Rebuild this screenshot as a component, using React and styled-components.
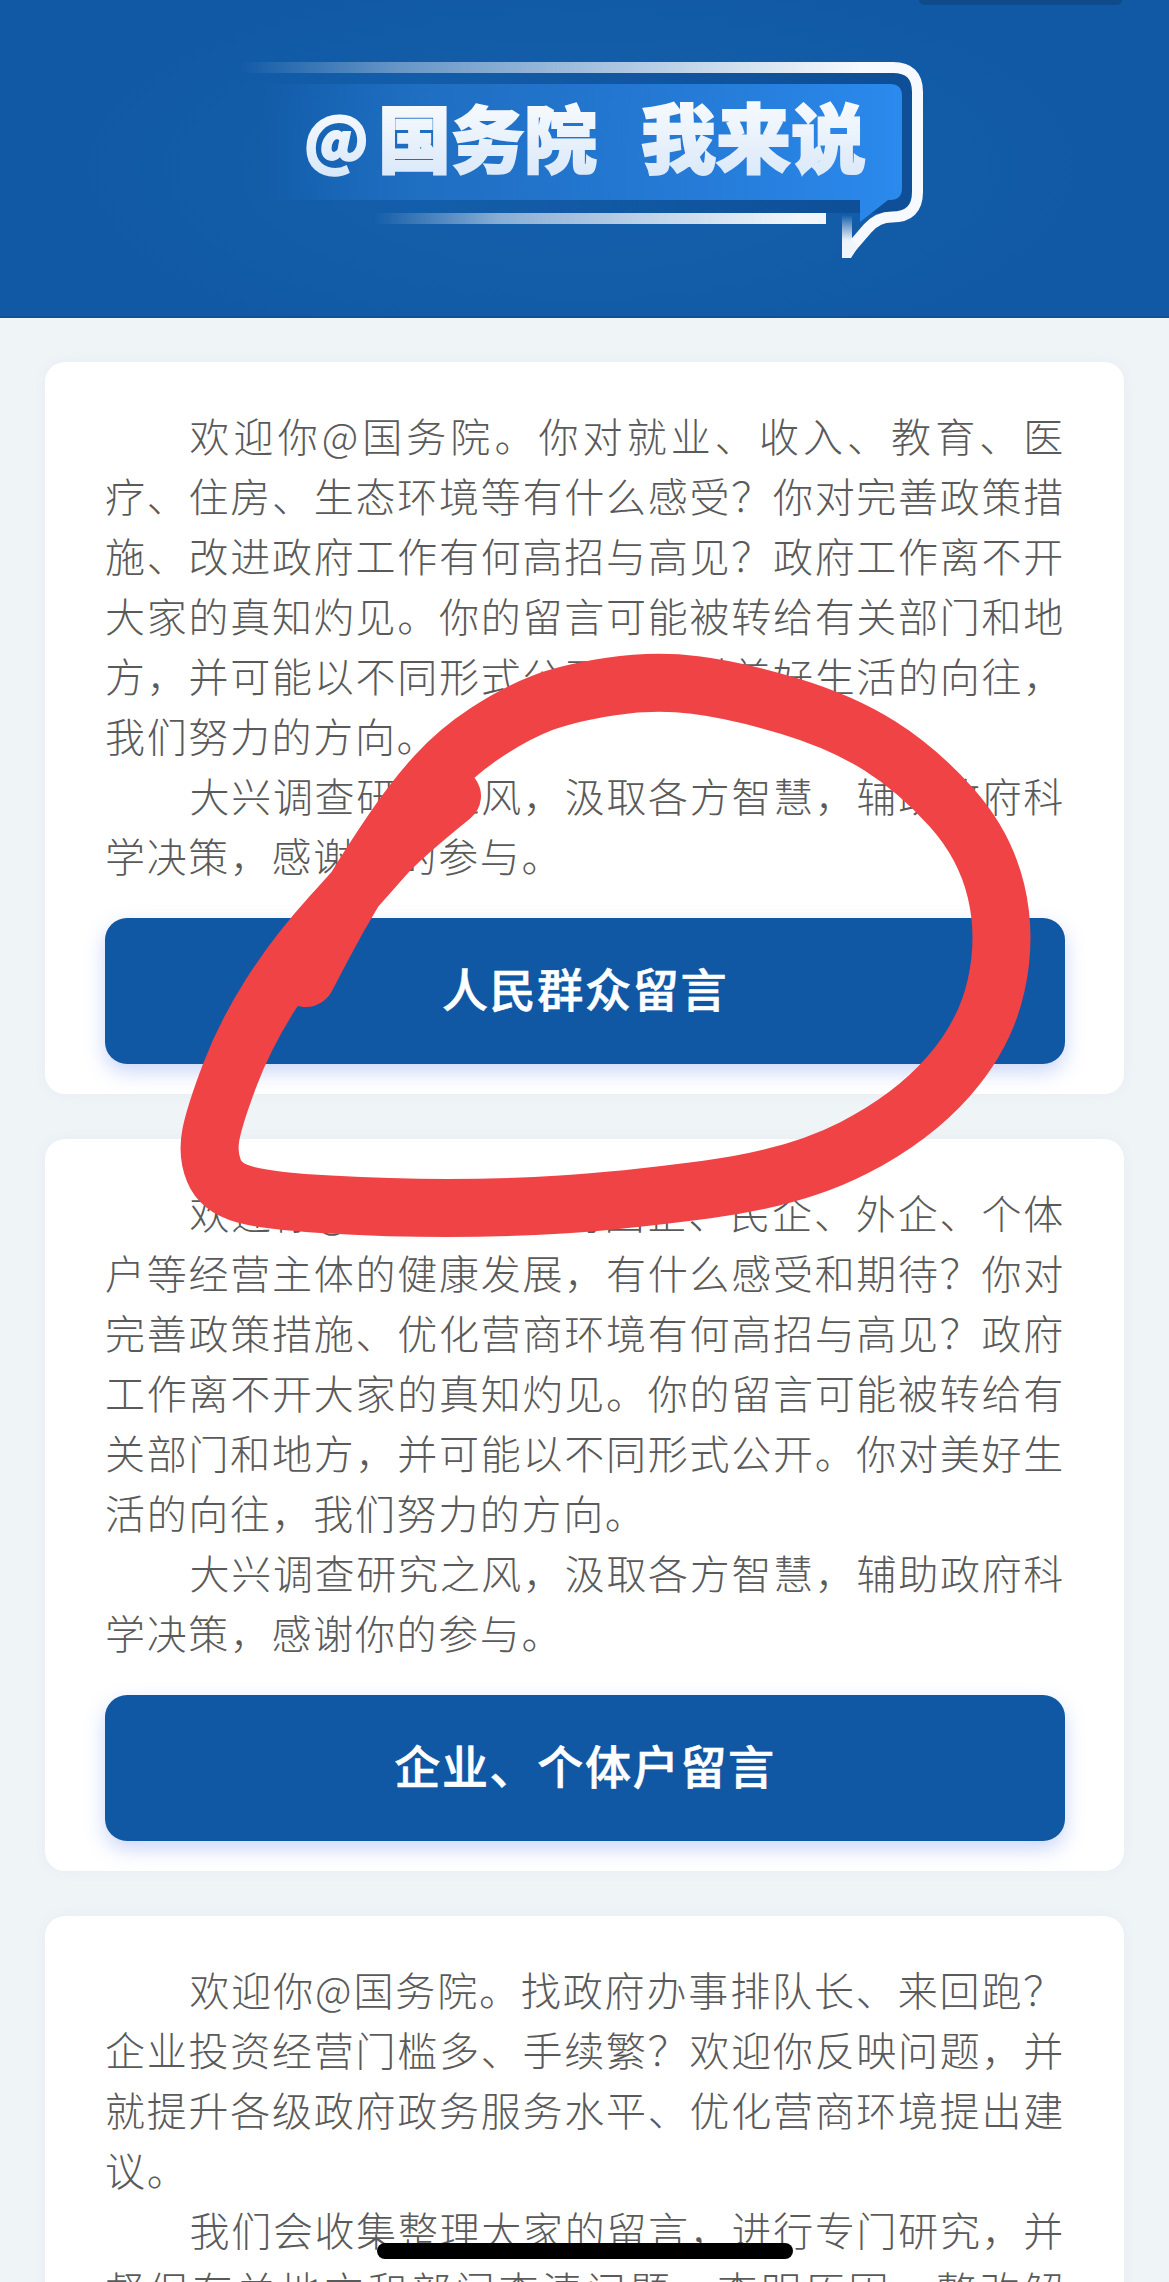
import React from 'react';
import styled, { createGlobalStyle } from 'styled-components';

const GlobalStyle = createGlobalStyle`
  html, body {
    margin: 0;
    padding: 0;
    background: #eff4f7;
  }
`;

const Page = styled.div`
  position: relative;
  width: 1169px;
  height: 2282px;
  overflow: hidden;
  background: #eff4f7;
  font-family: "Noto Sans CJK SC", "Noto Sans", sans-serif;
`;

const Header = styled.header`
  position: relative;
  box-sizing: border-box;
  height: 318px;
  padding: 55px 0 0 230px;
  background: radial-gradient(ellipse 520px 200px at 580px 170px, #1460ac 0%, #1159a5 100%);
  border-bottom: 2px solid #0e519b;
`;

const TopPill = styled.div`
  position: absolute;
  top: 0;
  left: 919px;
  width: 203px;
  height: 5px;
  background: #0f4a8a;
  border-radius: 0 0 10px 10px;
`;

const Logo = styled.svg`
  display: block;
  width: 700px;
  height: 210px;
`;

const LogoText = styled.text`
  font-family: "Noto Sans CJK SC", sans-serif;
  font-size: ${(p) => p.$size}px;
  font-weight: 900;
`;

const Main = styled.main`
  display: flex;
  flex-direction: column;
  gap: 45px;
  padding: 44px 45px 0;
`;

const Card = styled.section`
  box-sizing: border-box;
  padding: 43px 59px 30px 60px;
  background: #fff;
  border-radius: 20px;
  box-shadow: 0 0 14px rgba(60, 90, 120, 0.05);
`;

const Para = styled.p`
  margin: 0;
  font-size: 40px;
  font-weight: 300;
  line-height: 60px;
  letter-spacing: 1.65px;
  text-indent: 84.5px;
  text-align: justify;
  color: #5a5a5a;
`;

const MessageButton = styled.button`
  display: block;
  box-sizing: border-box;
  width: 100%;
  height: 146px;
  margin-top: 33px;
  padding: 0 0 8px;
  border: 0;
  border-radius: 22px;
  background: #1058a4;
  color: #fff;
  font-family: inherit;
  font-size: 46px;
  font-weight: 500;
  letter-spacing: 1.7px;
  -webkit-text-stroke: 0.6px #fff;
  box-shadow: 0 8px 20px rgba(70, 110, 235, 0.28);
`;

const Scribble = styled.svg`
  position: absolute;
  top: 0;
  left: 0;
  width: 1169px;
  height: 2282px;
  pointer-events: none;
`;

const HomeBar = styled.div`
  position: absolute;
  left: 377px;
  top: 2243px;
  width: 416px;
  height: 16px;
  border-radius: 8px;
  background: #000;
`;

// hand drawn loop, runs from the inner end on the text round to the end on the button
const loopPoints = [
  [452, 796], [400, 838], [366, 877], [295, 956], [245, 1035], [215, 1114], [207, 1154],
  [221, 1188], [269, 1201], [390, 1208], [504, 1208], [619, 1201], [795, 1178], [912, 1118],
  [985, 1035], [1007, 937], [985, 845], [918, 770], [842, 722], [736, 690], [654, 680],
  [568, 693], [516, 713], [458, 751], [415, 798], [372, 861], [338, 917], [306, 978],
];

const smoothPath = (pts) => {
  let d = `M${pts[0][0]} ${pts[0][1]}`;
  for (let i = 1; i < pts.length - 1; i++) {
    const mx = (pts[i][0] + pts[i + 1][0]) / 2;
    const my = (pts[i][1] + pts[i + 1][1]) / 2;
    d += ` Q${pts[i][0]} ${pts[i][1]} ${mx} ${my}`;
  }
  const last = pts[pts.length - 1];
  return `${d} L${last[0]} ${last[1]}`;
};

const cards = [
  {
    id: 'people',
    paragraphs: [
      '欢迎你@国务院。你对就业、收入、教育、医疗、住房、生态环境等有什么感受？你对完善政策措施、改进政府工作有何高招与高见？政府工作离不开大家的真知灼见。你的留言可能被转给有关部门和地方，并可能以不同形式公开。你对美好生活的向往，我们努力的方向。',
      '大兴调查研究之风，汲取各方智慧，辅助政府科学决策，感谢你的参与。',
    ],
    button: '人民群众留言',
  },
  {
    id: 'business',
    paragraphs: [
      '欢迎你@国务院。你对国企、民企、外企、个体户等经营主体的健康发展，有什么感受和期待？你对完善政策措施、优化营商环境有何高招与高见？政府工作离不开大家的真知灼见。你的留言可能被转给有关部门和地方，并可能以不同形式公开。你对美好生活的向往，我们努力的方向。',
      '大兴调查研究之风，汲取各方智慧，辅助政府科学决策，感谢你的参与。',
    ],
    button: '企业、个体户留言',
  },
  {
    id: 'service',
    paragraphs: [
      '欢迎你@国务院。找政府办事排队长、来回跑？企业投资经营门槛多、手续繁？欢迎你反映问题，并就提升各级政府政务服务水平、优化营商环境提出建议。',
      '我们会收集整理大家的留言，进行专门研究，并督促有关地方和部门查清问题、查明原因、整改解决。',
    ],
  },
];

const BannerLogo = () => (
  <Logo viewBox="230 55 700 210">
    <defs>
      <linearGradient id="topBar" gradientUnits="userSpaceOnUse" x1="239" y1="0" x2="860" y2="0">
        <stop offset="0" stopColor="#fff" stopOpacity="0" />
        <stop offset="0.25" stopColor="#fff" stopOpacity="0.35" />
        <stop offset="1" stopColor="#f6f9fd" />
      </linearGradient>
      <linearGradient id="lowBar" gradientUnits="userSpaceOnUse" x1="373" y1="0" x2="800" y2="0">
        <stop offset="0" stopColor="#fff" stopOpacity="0" />
        <stop offset="0.3" stopColor="#fff" stopOpacity="0.5" />
        <stop offset="1" stopColor="#f2f6fb" />
      </linearGradient>
      <linearGradient id="tailFade" x1="0" y1="0" x2="0" y2="1">
        <stop offset="0" stopColor="#fff" stopOpacity="0" />
        <stop offset="0.6" stopColor="#eef4fb" />
        <stop offset="1" stopColor="#f2f6fb" />
      </linearGradient>
      <linearGradient id="bubbleFill" gradientUnits="userSpaceOnUse" x1="261" y1="0" x2="902" y2="0">
        <stop offset="0" stopColor="#2b88ea" stopOpacity="0" />
        <stop offset="0.25" stopColor="#2b80dc" stopOpacity="0.5" />
        <stop offset="1" stopColor="#2b8aee" />
      </linearGradient>
      <linearGradient id="bubbleShade" gradientUnits="userSpaceOnUse" x1="420" y1="0" x2="860" y2="0">
        <stop offset="0" stopColor="#0c4a90" stopOpacity="0" />
        <stop offset="1" stopColor="#0c4a90" stopOpacity="0.7" />
      </linearGradient>
      <linearGradient id="letters" x1="0" y1="0" x2="0" y2="1">
        <stop offset="0" stopColor="#ffffff" />
        <stop offset="1" stopColor="#d6e6f8" />
      </linearGradient>
    </defs>
    <path d="M300 73 H912 V190 Q912 213 888 213 H300 Z" fill="url(#bubbleShade)" />
    <path d="M261 84 H890 Q902 84 902 96 V188 Q902 200 890 200 H888 L860 222 V200 H261 Z" fill="url(#bubbleFill)" />
    <path
      d="M239 67.5 H893 Q917.5 67.5 917.5 92 V192 Q917.5 217 892 217 Q878 217 868 228 L849 250"
      fill="none"
      stroke="url(#topBar)"
      strokeWidth="11"
    />
    <rect x="373" y="213" width="453" height="11" fill="url(#lowBar)" />
    <path d="M842 215 H852 V241 L858 247 L851 258 H842 Z" fill="url(#tailFade)" />
    <LogoText $size={62} x="304" y="163" fill="url(#letters)" stroke="url(#letters)" strokeWidth="2">@</LogoText>
    <LogoText $size={73} x="378" y="167" fill="url(#letters)" stroke="url(#letters)" strokeWidth="2">国务院</LogoText>
    <LogoText $size={75} x="641" y="167" fill="url(#letters)" stroke="url(#letters)" strokeWidth="2">我来说</LogoText>
  </Logo>
);

const App = () => (
  <Page>
    <GlobalStyle />
    <Header>
      <TopPill />
      <BannerLogo />
    </Header>
    <Main>
      {cards.map((card) => (
        <Card key={card.id}>
          {card.paragraphs.map((text) => (
            <Para key={text}>{text}</Para>
          ))}
          {card.button && <MessageButton>{card.button}</MessageButton>}
        </Card>
      ))}
    </Main>
    <Scribble viewBox="0 0 1169 2282">
      <path
        d={smoothPath(loopPoints)}
        fill="none"
        stroke="#f04346"
        strokeWidth="58"
        strokeLinecap="round"
        strokeLinejoin="round"
      />
    </Scribble>
    <HomeBar />
  </Page>
);

export default App;
